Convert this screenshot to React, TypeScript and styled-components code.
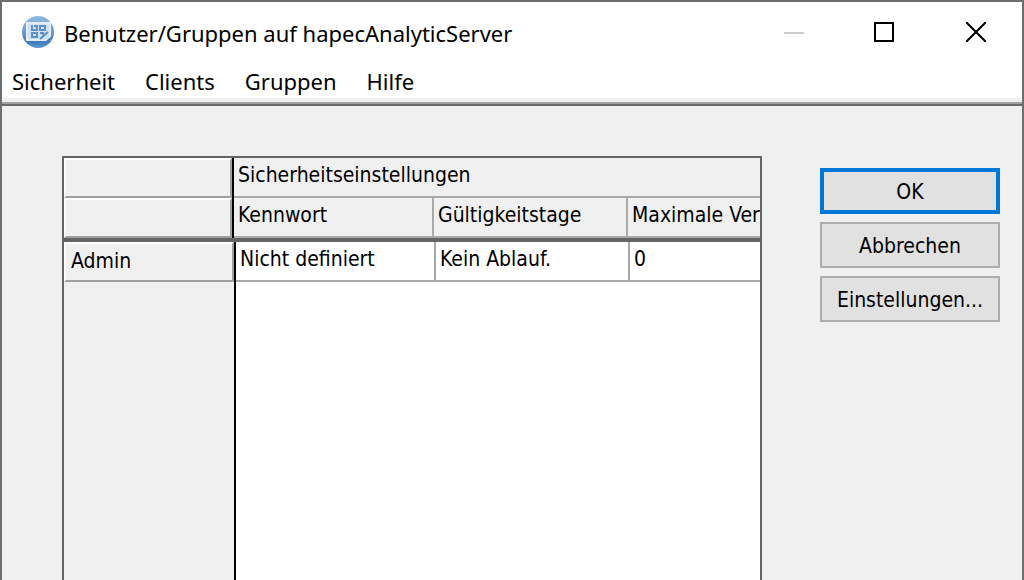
import React from "react";
import styled, { createGlobalStyle, css } from "styled-components";

const GlobalStyle = createGlobalStyle`
  *, *::before, *::after { box-sizing: border-box; }
  body { margin: 0; background: #f0f0f0; }
`;

const uiFont = `"Noto Sans", "Open Sans", sans-serif`;
const dialogFont = `"DejaVu Sans Condensed", "Noto Sans", sans-serif`;

const Window = styled.div`
  display: flex;
  flex-direction: column;
  min-height: 100vh;
  border: 2px solid #6e6e6e;
  border-bottom: 0;
  background: #f0f0f0;
  color: #000;
  font-family: ${uiFont};
`;

const TitleBar = styled.header`
  display: flex;
  align-items: center;
  height: 60px;
  padding-left: 20px;
  background: #fff;
`;

const Title = styled.h1`
  flex: 1;
  margin: 0;
  padding: 2px 0 0 8px;
  font-size: 22px;
  line-height: 32px;
  font-weight: 400;
  white-space: nowrap;
`;

const WindowButton = styled.button`
  display: flex;
  align-items: center;
  justify-content: center;
  width: 92px;
  height: 60px;
  padding: 0;
  border: 0;
  background: transparent;
`;

const MenuBar = styled.nav`
  display: flex;
  gap: 30px;
  height: 36px;
  padding-left: 10px;
  background: #fff;
`;

const MenuItem = styled.button`
  padding: 0;
  border: 0;
  background: transparent;
  color: #000;
  font-family: ${uiFont};
  font-size: 22px;
  line-height: 38px;
`;

const MenuEdge = styled.div`
  height: 8px;
  border-top: 4px solid #f0f0f0;
  border-bottom: 2px solid #696969;
  background: #a0a0a0;
`;

const Content = styled.main`
  display: flex;
  flex: 1;
  gap: 58px;
  padding: 50px 22px 0 60px;
  font-family: ${dialogFont};
`;

const Sheet = styled.section`
  display: flex;
  flex: 1;
  flex-direction: column;
  min-width: 0;
  border: 2px solid #646464;
  border-bottom: 0;
  background: #fff;
  overflow: hidden;
`;

const Grid = styled.table`
  display: block;
  font-size: 21px;
  line-height: 34px;
`;

const Head = styled.thead`
  display: block;
  border-bottom: 4px solid #646464;
  background: #f0f0f0;
`;

const Body = styled.tbody`
  display: block;
`;

const Row = styled.tr<{ $columns: string }>`
  display: grid;
  grid-template-columns: ${(p) => p.$columns};
  height: 40px;
`;

const cell = css`
  min-width: 0;
  padding: 0 0 0 4px;
  border-right: 2px solid #a9a9a9;
  border-bottom: 2px solid #a9a9a9;
  font-weight: 400;
  text-align: left;
  white-space: nowrap;
  overflow: hidden;

  &:last-child {
    border-right: 0;
  }
`;

const HeadCell = styled.th`
  ${cell}
`;

const DataCell = styled.td`
  ${cell}
`;

const RowLabel = styled.div`
  height: 40px;
  padding-left: 5px;
  border: 2px solid #fff;
  border-right-color: #a0a0a0;
  border-bottom-color: #a0a0a0;
  background: #f0f0f0;
`;

const RowHead = styled.th`
  padding: 0;
  border-right: 2px solid #000;
  font-weight: 400;
  text-align: left;
`;

const CornerCell = styled.td`
  padding: 0;
  border-right: 2px solid #000;
`;

const EmptyRows = styled.div`
  flex: 1;
  width: 172px;
  border-right: 2px solid #000;
  background: #f0f0f0;
`;

const Actions = styled.div`
  display: flex;
  flex-direction: column;
  gap: 8px;
  width: 180px;
  padding-top: 12px;
`;

const ActionButton = styled.button<{ $primary?: boolean }>`
  height: 46px;
  padding: 2px 0 0;
  border: ${(p) => (p.$primary ? "4px solid #0078d7" : "2px solid #adadad")};
  background: #e1e1e1;
  color: #000;
  font-family: ${dialogFont};
  font-size: 21px;
  line-height: 28px;
  white-space: nowrap;
`;

const AppIcon = () => (
  <svg width="34" height="34" viewBox="0 0 34 34" aria-hidden="true">
    <defs>
      <linearGradient id="ball" x1="0" y1="0" x2="0" y2="1">
        <stop offset="0" stopColor="#8fbbe0" />
        <stop offset="0.5" stopColor="#6a9bcb" />
        <stop offset="0.8" stopColor="#3f7dba" />
        <stop offset="1" stopColor="#5b97cf" />
      </linearGradient>
    </defs>
    <circle cx="16" cy="17" r="16" fill="url(#ball)" />
    <path d="M5 8h23v17H5z" fill="#cfe0f2" stroke="#e3edf8" strokeWidth="2" />
    <path
      d="M10 10v5h5v-4h-3M18 11h5v4h-5zM10 18h5v4h-5zM18 18h3v2M18 24l8-7"
      stroke="#5f8fc8"
      strokeWidth="2"
      fill="none"
    />
    <path d="M24 26l6-5-2 6z" fill="#3f7dba" />
  </svg>
);

const menus = ["Sicherheit", "Clients", "Gruppen", "Hilfe"];
const users = [{ name: "Admin", password: "Nicht definiert", days: "Kein Ablauf.", max: "0" }];

export default function App() {
  return (
    <>
      <GlobalStyle />
      <Window>
        <TitleBar>
          <AppIcon />
          <Title>Benutzer/Gruppen auf hapecAnalyticServer</Title>
          <WindowButton aria-label="Minimieren" disabled>
            <svg width="20" height="20" shapeRendering="crispEdges" overflow="visible">
              <path d="M2 11h20" stroke="#ccc" strokeWidth="2" />
            </svg>
          </WindowButton>
          <WindowButton aria-label="Maximieren">
            <svg width="20" height="20">
              <path d="M1 1h18v18H1z" fill="none" stroke="#000" strokeWidth="2" />
            </svg>
          </WindowButton>
          <WindowButton aria-label="Schließen">
            <svg width="20" height="20">
              <path d="M0 0L20 20M20 0L0 20" stroke="#000" strokeWidth="2" />
            </svg>
          </WindowButton>
        </TitleBar>
        <MenuBar>
          {menus.map((m) => (
            <MenuItem key={m}>{m}</MenuItem>
          ))}
        </MenuBar>
        <MenuEdge />
        <Content>
          <Sheet>
            <Grid>
              <Head>
                <Row $columns="170px 1fr">
                  <CornerCell>
                    <RowLabel />
                  </CornerCell>
                  <HeadCell scope="colgroup">Sicherheitseinstellungen</HeadCell>
                </Row>
                <Row $columns="170px 200px 194px 1fr">
                  <CornerCell>
                    <RowLabel />
                  </CornerCell>
                  <HeadCell scope="col">Kennwort</HeadCell>
                  <HeadCell scope="col">Gültigkeitstage</HeadCell>
                  <HeadCell scope="col">Maximale Verl</HeadCell>
                </Row>
              </Head>
              <Body>
                {users.map((u) => (
                  <Row key={u.name} $columns="172px 200px 194px 1fr">
                    <RowHead scope="row">
                      <RowLabel>{u.name}</RowLabel>
                    </RowHead>
                    <DataCell>{u.password}</DataCell>
                    <DataCell>{u.days}</DataCell>
                    <DataCell>{u.max}</DataCell>
                  </Row>
                ))}
              </Body>
            </Grid>
            <EmptyRows />
          </Sheet>
          <Actions>
            <ActionButton $primary>OK</ActionButton>
            <ActionButton>Abbrechen</ActionButton>
            <ActionButton>Einstellungen...</ActionButton>
          </Actions>
        </Content>
      </Window>
    </>
  );
}
